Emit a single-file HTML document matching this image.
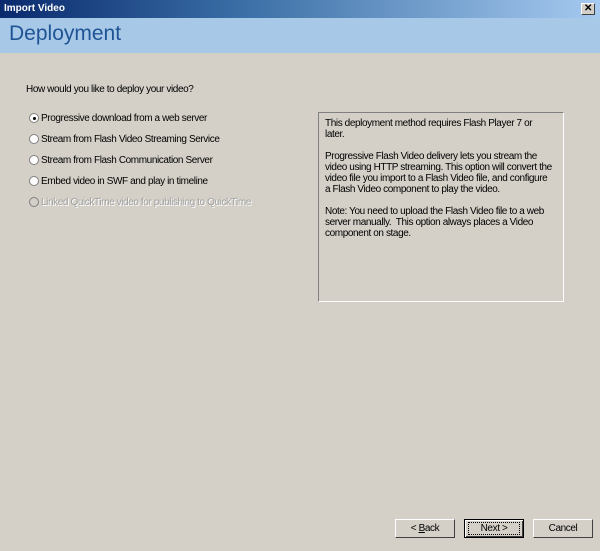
<!DOCTYPE html><html><head><style>
body{margin:0;width:600px;height:551px;background:#d4d0c8;font-family:"Liberation Sans",sans-serif;font-size:10px;letter-spacing:-0.4px;color:#000;position:relative;overflow:hidden}
.a{position:absolute;white-space:nowrap}
.tb{left:0;top:0;width:600px;height:18px;background:linear-gradient(to right,#0a2a6e,#3a6ea5 40%,#a6caf0);}
.hd{left:0;top:18px;width:600px;height:35px;background:#a8c8e8}
.r{position:absolute;width:10px;height:10px;border-radius:50%;background:#fff;border:1px solid #808080;box-sizing:border-box;left:29px}
.btn{position:absolute;top:519px;width:60px;height:19px;border:1px solid;border-color:#fff #404040 #404040 #fff;box-sizing:border-box;text-align:center;line-height:17px;background:#d4d0c8}
</style></head><body>
<div class="a tb"></div>
<div class="a" style="left:4px;top:3px;color:#fff;font-weight:bold;font-size:10px;letter-spacing:0">Import Video</div>
<div class="a" style="left:581px;top:3px;width:14px;height:12px;background:#d4d0c8;border:1px solid;border-color:#fff #404040 #404040 #fff;box-sizing:border-box;font-size:10px;line-height:10px;text-align:center;font-weight:bold">✕</div>
<div class="a hd"></div>
<div class="a" style="left:9px;top:22px;font-size:21px;letter-spacing:0;color:#1e5494">Deployment</div>
<div class="a" style="left:26px;top:84px">How would you like to deploy your video?</div>
<div class="r" style="top:113px"><div style="position:absolute;left:3px;top:3px;width:3px;height:3px;background:#000;border-radius:50%"></div></div>
<div class="a" style="left:41px;top:113px">Progressive download from a web server</div>
<div class="r" style="top:134px"></div><div class="a" style="left:41px;top:134px">Stream from Flash Video Streaming Service</div>
<div class="r" style="top:155px"></div><div class="a" style="left:41px;top:155px">Stream from Flash Communication Server</div>
<div class="r" style="top:176px"></div><div class="a" style="left:41px;top:176px">Embed video in SWF and play in timeline</div>
<div class="r" style="top:197px;background:#d4d0c8"></div><div class="a" style="left:41px;top:197px;color:#a0a0a0;text-shadow:1px 1px 0 #fff">Linked QuickTime video for publishing to QuickTime</div>
<div class="a" style="left:318px;top:112px;width:246px;height:190px;border:1px solid;border-color:#808080 #fff #fff #808080;box-sizing:border-box"></div>
<div class="a" style="left:325px;top:118px;line-height:11px">This deployment method requires Flash Player 7 or<br>later.<br><br>Progressive Flash Video delivery lets you stream the<br>video using HTTP streaming. This option will convert the<br>video file you import to a Flash Video file, and configure<br>a Flash Video component to play the video.<br><br>Note: You need to upload the Flash Video file to a web<br>server manually.&nbsp; This option always places a Video<br>component on stage.</div>
<div class="btn" style="left:395px">&lt; <u>B</u>ack</div>
<div class="btn" style="left:464px;border:1px solid #000;box-shadow:inset 1px 1px 0 #fff,inset -1px -1px 0 #404040"><span style="outline:1px dotted #000;padding:0 12px">Next &gt;</span></div>
<div class="btn" style="left:533px">Cancel</div>
</body></html>
